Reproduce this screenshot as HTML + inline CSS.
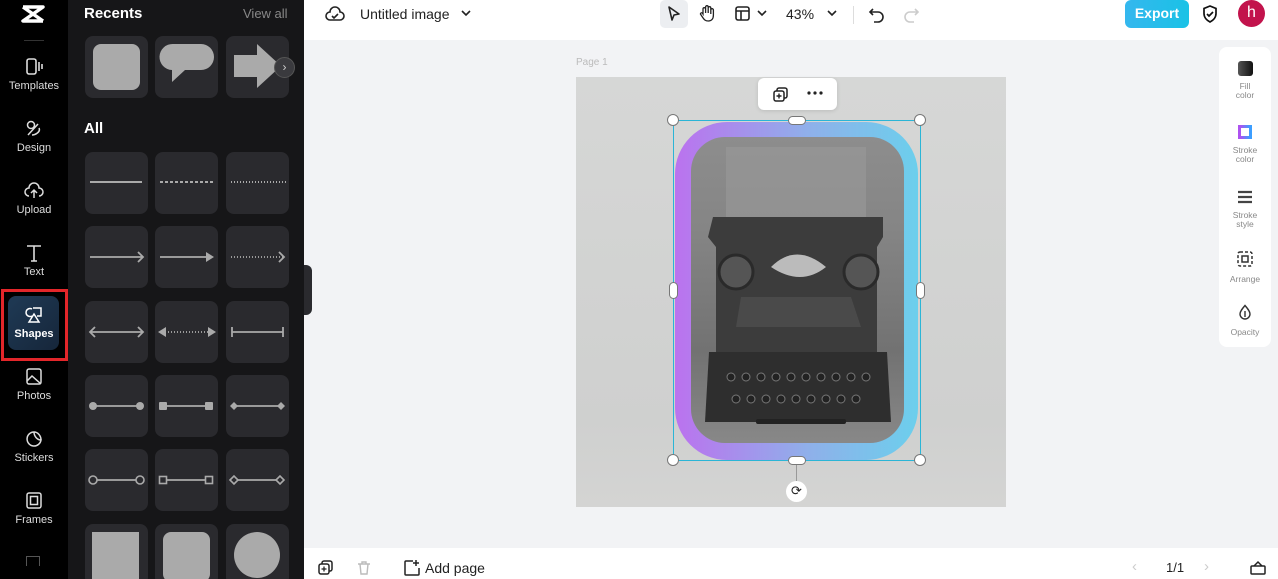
<!DOCTYPE html>
<html><head><meta charset="utf-8"><style>
*{margin:0;padding:0;box-sizing:border-box}
html,body{width:1278px;height:579px;overflow:hidden}
body{font-family:"Liberation Sans",sans-serif;background:#f2f3f5;position:relative}
.abs{position:absolute}
.rail{left:0;top:0;width:68px;height:579px;background:#000}
.ri{position:absolute;left:0;width:68px;text-align:center;color:#ddd;font-size:11px}
.ri svg{display:block;margin:0 auto 4px}
.panel{left:68px;top:0;width:236px;height:579px;background:#161618}
.t{position:absolute;width:63px;height:62px;background:#2a2a2e;border-radius:8px}
.t svg{position:absolute;left:0;top:0}
.top{left:304px;top:0;width:974px;height:40px;background:#fff}
.bot{left:304px;top:548px;width:974px;height:31px;background:#fff}
.rp{left:1219px;top:47px;width:52px;height:300px;background:#fff;border-radius:8px}
.rpi{position:absolute;left:0;width:52px;text-align:center;font-size:8.5px;color:#888;line-height:9px}
.h{position:absolute;width:12px;height:12px;border-radius:50%;background:#fff;border:1px solid #777}
</style></head><body>
<div class="abs rail">
 <svg class="abs" style="left:20px;top:4px" width="26" height="20" viewBox="0 0 26 20"><path d="M3 3h20l-20 14h20M3 3l20 14" stroke="#fff" stroke-width="3.5" fill="none" stroke-linejoin="round"/></svg>
 <div class="abs" style="left:24px;top:40px;width:20px;height:1px;background:#333"></div>
 <div class="ri" style="top:58px"><svg width="20" height="18" viewBox="0 0 20 18"><rect x="3" y="1" width="9" height="15" rx="2" stroke="#ddd" stroke-width="1.6" fill="none"/><path d="M15 4v9M18 6v5" stroke="#ddd" stroke-width="1.6"/></svg>Templates</div>
 <div class="ri" style="top:120px"><svg width="20" height="18" viewBox="0 0 20 18"><circle cx="7" cy="5" r="3.5" stroke="#ddd" stroke-width="1.5" fill="none"/><path d="M4 15l10-11M8 15c3 0 9-3 7-7" stroke="#ddd" stroke-width="1.5" fill="none"/></svg>Design</div>
 <div class="ri" style="top:182px"><svg width="20" height="18" viewBox="0 0 20 18"><path d="M5 14a4 4 0 0 1 0-8a5 5 0 0 1 10 0a4 4 0 0 1 0 8M10 16V8M7 11l3-3 3 3" stroke="#ddd" stroke-width="1.5" fill="none"/></svg>Upload</div>
 <div class="ri" style="top:244px"><svg width="20" height="18" viewBox="0 0 20 18"><path d="M3 2h14M10 2v15M7 17h6" stroke="#ddd" stroke-width="1.6" fill="none"/></svg>Text</div>
 <div class="abs" style="left:1px;top:289px;width:67px;height:72px;border:3px solid #e3262a"></div>
 <div class="abs" style="left:8px;top:296px;width:51px;height:54px;border-radius:8px;background:linear-gradient(135deg,#1f3a55,#16263a)"></div>
 <div class="ri" style="top:306px;color:#fff;font-weight:bold"><svg width="20" height="18" viewBox="0 0 20 18"><path d="M8 3a4 4 0 1 0 0 7M9 2h8v8h-4M5 16l5-8 5 8z" stroke="#fff" stroke-width="1.5" fill="none"/></svg>Shapes</div>
 <div class="ri" style="top:368px"><svg width="20" height="18" viewBox="0 0 20 18"><rect x="3" y="1" width="14" height="15" rx="2" stroke="#ddd" stroke-width="1.5" fill="none"/><path d="M3 13l5-5 9 8" stroke="#ddd" stroke-width="1.5" fill="none"/></svg>Photos</div>
 <div class="ri" style="top:430px"><svg width="20" height="18" viewBox="0 0 20 18"><path d="M17 10a7 7 0 1 1-7-8c0 4 3 8 7 8zM10 2c4 0 7 4 7 8" stroke="#ddd" stroke-width="1.5" fill="none"/></svg>Stickers</div>
 <div class="ri" style="top:492px"><svg width="20" height="18" viewBox="0 0 20 18"><rect x="3" y="1" width="14" height="15" rx="2" stroke="#ddd" stroke-width="1.5" fill="none"/><rect x="6.5" y="4.5" width="7" height="8" stroke="#ddd" stroke-width="1.5" fill="none"/></svg>Frames</div>
 <div class="abs" style="left:26px;top:556px;width:14px;height:10px;border:1.5px solid #555;border-bottom:0"></div>
</div>
<div class="abs panel">
 <div class="abs" style="left:16px;top:5px;color:#fff;font-weight:bold;font-size:15px">Recents</div>
 <div class="abs" style="left:175px;top:6px;color:#888;font-size:13px">View all</div>
 <div class="abs" style="left:16px;top:120px;color:#fff;font-weight:bold;font-size:15px">All</div>
</div>
<div class="t" style="left:85px;top:36px"><svg width="63" height="62"><rect x="8" y="8" width="47" height="46" rx="8" fill="#aaa"/></svg></div>
<div class="t" style="left:155px;top:36px"><svg width="63" height="62"><path d="M18 8h28a13 13 0 0 1 0 26H30l-13 12v-12a13 13 0 0 1 1-26z" fill="#aaa"/></svg></div>
<div class="t" style="left:226px;top:36px"><svg width="63" height="62"><path d="M8 19h23V8l24 22-24 22V41H8z" fill="#aaa"/></svg></div>
<div class="abs" style="left:274px;top:57px;width:21px;height:21px;border-radius:50%;background:#3a3a3e;border:1px solid #555;color:#ccc;font-size:12px;text-align:center;line-height:19px">›</div>
<div class="t" style="left:85px;top:152px"><svg width="63" height="62"><path d="M5 30h52" stroke="#aaa" stroke-width="2"/></svg></div>
<div class="t" style="left:155px;top:152px"><svg width="63" height="62"><path d="M5 30h53" stroke="#aaa" stroke-width="2" stroke-dasharray="3 2"/></svg></div>
<div class="t" style="left:226px;top:152px"><svg width="63" height="62"><path d="M5 30h56" stroke="#aaa" stroke-width="2" stroke-dasharray="1 2"/></svg></div>
<div class="t" style="left:85px;top:226px"><svg width="63" height="62"><path d="M5 31h53M53 26l5 5-5 5" stroke="#aaa" stroke-width="1.8" fill="none"/></svg></div>
<div class="t" style="left:155px;top:226px"><svg width="63" height="62"><path d="M5 31h48" stroke="#aaa" stroke-width="1.8"/><path d="M51 26l8 5-8 5z" fill="#aaa"/></svg></div>
<div class="t" style="left:226px;top:226px"><svg width="63" height="62"><path d="M5 31h52" stroke="#aaa" stroke-width="1.8" stroke-dasharray="1 2"/><path d="M53 26l5 5-5 5" stroke="#aaa" stroke-width="1.8" fill="none"/></svg></div>
<div class="t" style="left:85px;top:301px"><svg width="63" height="62"><path d="M5 31h53M10 26l-5 5 5 5M53 26l5 5-5 5" stroke="#aaa" stroke-width="1.8" fill="none"/></svg></div>
<div class="t" style="left:155px;top:301px"><svg width="63" height="62"><path d="M10 31h44" stroke="#aaa" stroke-width="1.8" stroke-dasharray="1 2"/><path d="M3 31l8-5v10zM61 31l-8-5v10z" fill="#aaa"/></svg></div>
<div class="t" style="left:226px;top:301px"><svg width="63" height="62"><path d="M6 31h51M6 26v10M57 26v10" stroke="#aaa" stroke-width="1.8" fill="none"/></svg></div>
<div class="t" style="left:85px;top:375px"><svg width="63" height="62"><path d="M8 31h47" stroke="#aaa" stroke-width="1.8"/><circle cx="8" cy="31" r="4" fill="#aaa"/><circle cx="55" cy="31" r="4" fill="#aaa"/></svg></div>
<div class="t" style="left:155px;top:375px"><svg width="63" height="62"><path d="M8 31h47" stroke="#aaa" stroke-width="1.8"/><rect x="4" y="27" width="8" height="8" rx="1" fill="#aaa"/><rect x="50" y="27" width="8" height="8" rx="1" fill="#aaa"/></svg></div>
<div class="t" style="left:226px;top:375px"><svg width="63" height="62"><path d="M8 31h47" stroke="#aaa" stroke-width="1.8"/><path d="M4 31l4-4 4 4-4 4zM51 31l4-4 4 4-4 4z" fill="#aaa"/></svg></div>
<div class="t" style="left:85px;top:449px"><svg width="63" height="62"><path d="M12 31h39" stroke="#aaa" stroke-width="1.8"/><circle cx="8" cy="31" r="4" stroke="#aaa" stroke-width="1.6" fill="none"/><circle cx="55" cy="31" r="4" stroke="#aaa" stroke-width="1.6" fill="none"/></svg></div>
<div class="t" style="left:155px;top:449px"><svg width="63" height="62"><path d="M12 31h39" stroke="#aaa" stroke-width="1.8"/><rect x="4.5" y="27.5" width="7" height="7" stroke="#aaa" stroke-width="1.6" fill="none"/><rect x="50.5" y="27.5" width="7" height="7" stroke="#aaa" stroke-width="1.6" fill="none"/></svg></div>
<div class="t" style="left:226px;top:449px"><svg width="63" height="62"><path d="M12 31h38" stroke="#aaa" stroke-width="1.8"/><path d="M4 31l4-4 4 4-4 4zM50 31l4-4 4 4-4 4z" stroke="#aaa" stroke-width="1.6" fill="none"/></svg></div>
<div class="t" style="left:85px;top:524px"><svg width="63" height="62"><rect x="7" y="8" width="47" height="50" fill="#aaa"/></svg></div>
<div class="t" style="left:155px;top:524px"><svg width="63" height="62"><rect x="8" y="8" width="47" height="50" rx="8" fill="#aaa"/></svg></div>
<div class="t" style="left:226px;top:524px"><svg width="63" height="62"><circle cx="31" cy="31" r="23" fill="#aaa"/></svg></div>
<div class="abs" style="left:304px;top:265px;width:8px;height:50px;background:#2a2a2e;border-radius:0 6px 6px 0"></div>

<div class="abs top">
 <svg class="abs" style="left:20px;top:4px" width="22" height="20" viewBox="0 0 22 20"><path d="M6 16a4 4 0 0 1 0-8a5 5 0 0 1 10 0a4 4 0 0 1 0 8z M8 12l2 2 4-4" stroke="#222" stroke-width="1.6" fill="none"/></svg>
 <div class="abs" style="left:56px;top:6px;font-size:14px;color:#222">Untitled image</div>
 <svg class="abs" style="left:156px;top:8px" width="12" height="10"><path d="M2 3l4 4 4-4" stroke="#222" stroke-width="1.6" fill="none"/></svg>
 <div class="abs" style="left:356px;top:0;width:28px;height:28px;border-radius:5px;background:#eceef1"></div>
 <svg class="abs" style="left:362px;top:5px" width="16" height="18"><path d="M3 2l10 7-5 1-2 5z" stroke="#222" stroke-width="1.6" fill="none" stroke-linejoin="round"/></svg>
 <svg class="abs" style="left:394px;top:4px" width="18" height="18"><path d="M5 10V5a1.3 1.3 0 0 1 2.6 0v4V3a1.3 1.3 0 0 1 2.6 0v6V4a1.3 1.3 0 0 1 2.6 0v6V6a1.3 1.3 0 0 1 2.6 0v5c0 4-2 6-5 6s-4-1-6-4l-2-3a1.3 1.3 0 0 1 2-1z" stroke="#222" stroke-width="1.3" fill="none"/></svg>
 <svg class="abs" style="left:430px;top:5px" width="18" height="18"><rect x="2" y="2" width="13" height="13" rx="2" stroke="#222" stroke-width="1.6" fill="none"/><path d="M2 6h13M7 6v9" stroke="#222" stroke-width="1.6"/></svg>
 <svg class="abs" style="left:452px;top:8px" width="12" height="10"><path d="M2 3l4 4 4-4" stroke="#222" stroke-width="1.6" fill="none"/></svg>
 <div class="abs" style="left:482px;top:6px;font-size:14px;color:#222">43%</div>
 <svg class="abs" style="left:522px;top:8px" width="12" height="10"><path d="M2 3l4 4 4-4" stroke="#222" stroke-width="1.6" fill="none"/></svg>
 <div class="abs" style="left:549px;top:6px;width:1px;height:18px;background:#ddd"></div>
 <svg class="abs" style="left:564px;top:5px" width="18" height="18"><path d="M5 4L2 7l3 3M2 7h8a5 5 0 0 1 0 10H6" stroke="#222" stroke-width="1.6" fill="none"/></svg>
 <svg class="abs" style="left:598px;top:5px" width="18" height="18"><path d="M13 4l3 3-3 3M16 7H8a5 5 0 0 0 0 10h4" stroke="#ccc" stroke-width="1.6" fill="none"/></svg>
 <div class="abs" style="left:821px;top:0;width:64px;height:28px;border-radius:6px;background:linear-gradient(90deg,#34b7ee,#1ac2e6);color:#fff;font-weight:bold;font-size:14px;text-align:center;line-height:27px">Export</div>
 <svg class="abs" style="left:897px;top:4px" width="18" height="20"><path d="M9 2l6 2.5v5c0 4-3 7-6 8.5-3-1.5-6-4.5-6-8.5v-5z M6 10l2 2 4-4" stroke="#111" stroke-width="1.7" fill="none"/></svg>
 <div class="abs" style="left:934px;top:0;width:27px;height:27px;border-radius:50%;background:#c2134c;color:#fff;font-size:16px;text-align:center;line-height:26px">h</div>
</div>
<div class="abs rp">
 <div class="rpi" style="top:14px"><div style="width:15px;height:15px;margin:0 auto 6px;border-radius:3px;background:linear-gradient(90deg,#555,#111)"></div>Fill<br>color</div>
 <div class="rpi" style="top:78px"><div style="width:14px;height:14px;margin:0 auto 7px;border:3px solid;border-image:linear-gradient(90deg,#b050f0,#3aa0ff) 1"></div>Stroke<br>color</div>
 <div class="rpi" style="top:142px"><svg width="16" height="16" style="display:block;margin:0 auto 6px"><path d="M1 3h14M1 8h14M1 13h14" stroke="#444" stroke-width="2.2"/></svg>Stroke<br>style</div>
 <div class="rpi" style="top:204px"><svg width="16" height="16" style="display:block;margin:0 auto 8px"><rect x="1" y="1" width="14" height="14" rx="2" stroke="#333" stroke-width="1.5" stroke-dasharray="3 2" fill="none"/><rect x="5" y="5" width="6" height="6" stroke="#333" stroke-width="1.5" fill="none"/></svg>Arrange</div>
 <div class="rpi" style="top:257px"><svg width="16" height="16" style="display:block;margin:0 auto 8px"><path d="M8 1.5C5 5 3 7.5 3 10a5 5 0 0 0 10 0c0-2.5-2-5-5-8.5z M8 7v6" stroke="#333" stroke-width="1.4" fill="none"/></svg>Opacity</div>
</div>
<div class="abs" style="left:576px;top:57px;font-size:10px;color:#bbb">Page 1</div>
<div class="abs" style="left:576px;top:77px;width:430px;height:430px;background:linear-gradient(180deg,#d6d7d6,#cfd0cf 80%,#d4d4d3)"></div>
<div class="abs" style="left:675px;top:122px;width:243px;height:338px;border-radius:52px;background:linear-gradient(90deg,#bb72ee,#8fb0ea 55%,#6ccfec)"></div>
<div class="abs" style="left:691px;top:137px;width:213px;height:306px;border-radius:34px;background:linear-gradient(180deg,#8d8d8d,#858585 30%,#727272 70%,#888);overflow:hidden">
 <svg width="213" height="306" viewBox="0 0 213 306">
  <rect x="35" y="10" width="140" height="80" fill="#999" opacity=".6"/>
  <path d="M22 80h170v20l-6 10v115H25V110l-8-10z" fill="#3c3c3c"/>
  <circle cx="45" cy="135" r="17" fill="#555" stroke="#2a2a2a" stroke-width="3"/>
  <circle cx="170" cy="135" r="17" fill="#555" stroke="#2a2a2a" stroke-width="3"/>
  <path d="M80 130q25 -25 55 0q-25 20 -55 0z" fill="#bbb"/>
  <path d="M50 160h110l10 30H45z" fill="#4a4a4a"/>
  <path d="M18 215h178l4 70H14z" fill="#2e2e2e"/>
  <g fill="#222" stroke="#777" stroke-width="1"><circle cx="40" cy="240" r="4"/><circle cx="55" cy="240" r="4"/><circle cx="70" cy="240" r="4"/><circle cx="85" cy="240" r="4"/><circle cx="100" cy="240" r="4"/><circle cx="115" cy="240" r="4"/><circle cx="130" cy="240" r="4"/><circle cx="145" cy="240" r="4"/><circle cx="160" cy="240" r="4"/><circle cx="175" cy="240" r="4"/><circle cx="45" cy="262" r="4"/><circle cx="60" cy="262" r="4"/><circle cx="75" cy="262" r="4"/><circle cx="90" cy="262" r="4"/><circle cx="105" cy="262" r="4"/><circle cx="120" cy="262" r="4"/><circle cx="135" cy="262" r="4"/><circle cx="150" cy="262" r="4"/><circle cx="165" cy="262" r="4"/></g>
  <rect x="65" y="282" width="90" height="5" rx="2" fill="#222"/>
 </svg>
</div>
<div class="abs" style="left:673px;top:120px;width:248px;height:341px;border:1.5px solid #2bb5d6"></div>
<div class="h" style="left:667px;top:114px"></div><div class="h" style="left:914px;top:114px"></div>
<div class="h" style="left:667px;top:454px"></div><div class="h" style="left:914px;top:454px"></div>
<div class="abs" style="left:788px;top:116px;width:18px;height:9px;border-radius:5px;background:#fff;border:1px solid #777"></div>
<div class="abs" style="left:788px;top:456px;width:18px;height:9px;border-radius:5px;background:#fff;border:1px solid #777"></div>
<div class="abs" style="left:669px;top:282px;width:9px;height:17px;border-radius:5px;background:#fff;border:1px solid #777"></div>
<div class="abs" style="left:916px;top:282px;width:9px;height:17px;border-radius:5px;background:#fff;border:1px solid #777"></div>
<div class="abs" style="left:796px;top:465px;width:1px;height:16px;background:#999"></div>
<div class="abs" style="left:786px;top:481px;width:21px;height:21px;border-radius:50%;background:#fff;text-align:center;font-size:13px;line-height:20px;color:#222">⟳</div>
<div class="abs" style="left:758px;top:78px;width:79px;height:32px;background:#fff;border-radius:6px;box-shadow:0 1px 4px rgba(0,0,0,.12)"></div>
<svg class="abs" style="left:772px;top:86px" width="17" height="17"><rect x="5" y="2" width="10" height="10" rx="2" stroke="#222" stroke-width="1.5" fill="none"/><rect x="2" y="5" width="10" height="10" rx="2" stroke="#222" stroke-width="1.5" fill="#fff"/><path d="M7 7.5v5M4.5 10h5" stroke="#222" stroke-width="1.4"/></svg>
<svg class="abs" style="left:806px;top:90px" width="18" height="6"><circle cx="3" cy="3" r="1.6" fill="#222"/><circle cx="9" cy="3" r="1.6" fill="#222"/><circle cx="15" cy="3" r="1.6" fill="#222"/></svg>

<div class="abs bot">
 <svg class="abs" style="left:14px;top:12px" width="16" height="16"><rect x="4" y="1" width="10" height="10" rx="2" stroke="#222" stroke-width="1.5" fill="none"/><rect x="1" y="4" width="10" height="10" rx="2" stroke="#222" stroke-width="1.5" fill="#fff"/><path d="M6 6.5v5M3.5 9h5" stroke="#222" stroke-width="1.3"/></svg>
 <svg class="abs" style="left:52px;top:12px" width="16" height="16"><path d="M2 4h12M6 4V2h4v2M4 4l1 10h6l1-10" stroke="#bbb" stroke-width="1.4" fill="none"/></svg>
 <svg class="abs" style="left:99px;top:11px" width="18" height="18"><path d="M10 2H3a1 1 0 0 0-1 1v12a1 1 0 0 0 1 1h12a1 1 0 0 0 1-1V9M13 1v6M10 4h6" stroke="#222" stroke-width="1.5" fill="none"/></svg>
 <div class="abs" style="left:121px;top:12px;font-size:14px;color:#222">Add page</div>
 <div class="abs" style="left:828px;top:10px;font-size:15px;color:#ccc">‹</div>
 <div class="abs" style="left:862px;top:12px;font-size:13px;color:#222">1/1</div>
 <div class="abs" style="left:900px;top:10px;font-size:15px;color:#ccc">›</div>
 <svg class="abs" style="left:946px;top:12px" width="16" height="16"><rect x="1" y="6" width="14" height="8" rx="1" stroke="#222" stroke-width="1.5" fill="none"/><path d="M4 6l4-4 4 4" stroke="#222" stroke-width="1.5" fill="none"/></svg>
</div>
</body></html>
